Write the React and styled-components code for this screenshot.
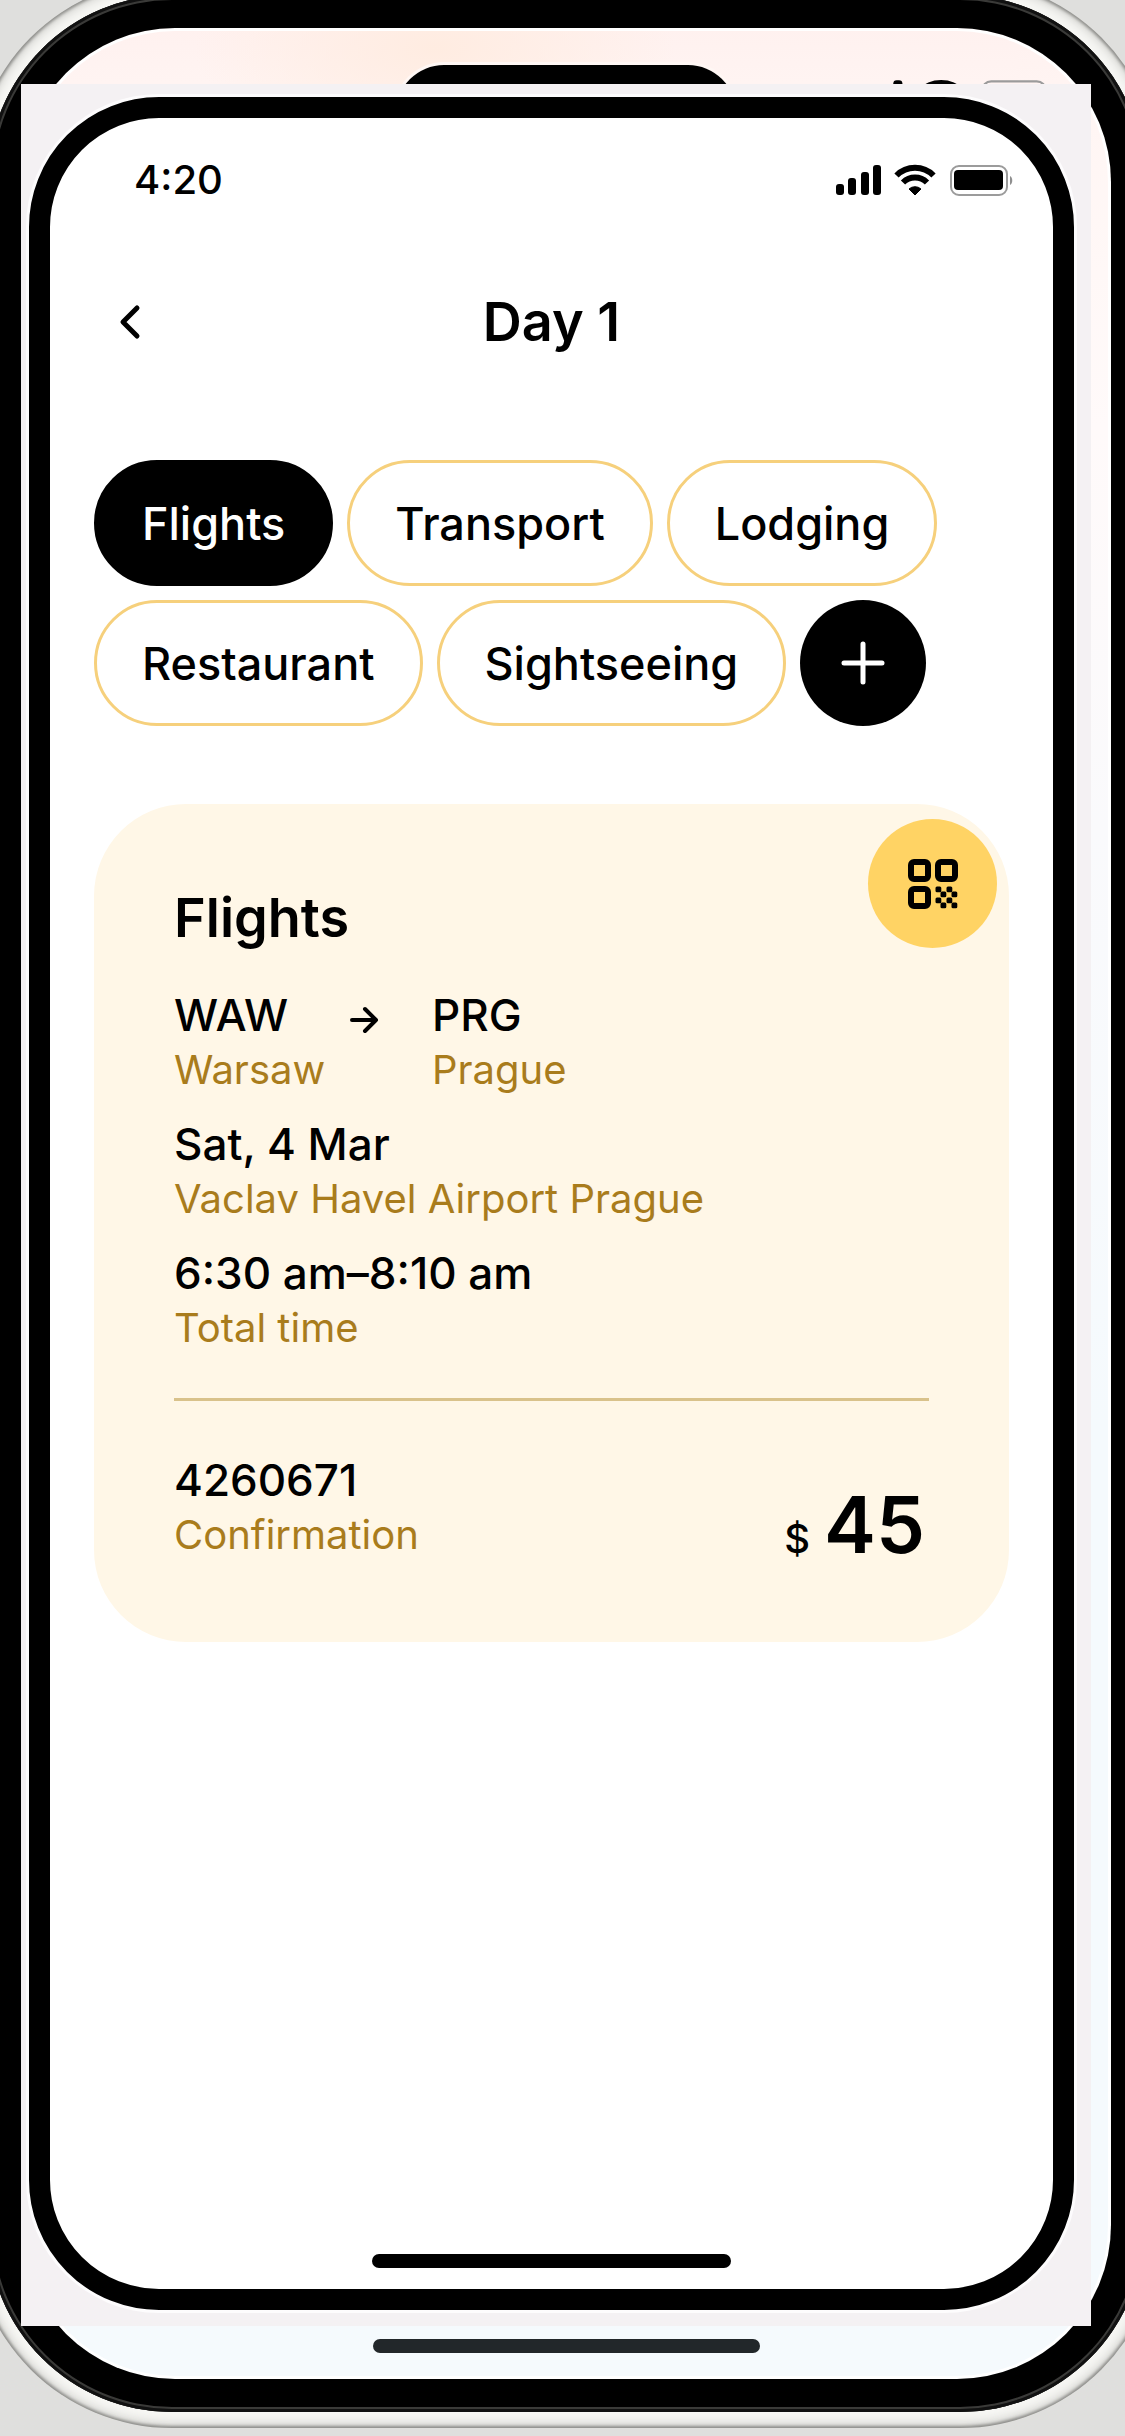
import React, { useState } from "react";
import styled, { createGlobalStyle } from "styled-components";

const GlobalStyle = createGlobalStyle`
  *, *::before, *::after { box-sizing: border-box; }
  body {
    margin: 0;
    background: #dfdfdd;
    font-family: "Inter", "Liberation Sans", sans-serif;
    color: #000;
  }
  h1, h2, p, dl, dt, dd { margin: 0; }
  button { font: inherit; color: inherit; cursor: pointer; }
`;

const Stage = styled.div`
  display: grid;
  grid-template-columns: minmax(0, 1fr);
  min-height: 100vh;
  overflow: hidden;
`;

const BackPhone = styled.div`
  grid-area: 1 / 1;
  display: flex;
  margin: -21px -35px 8px -28px;
  padding: 16px;
  border-radius: 200px;
  background: #f7f7f4;
  box-shadow: inset 0 0 3px 2px #8e8e8b, inset 0 0 12px 3px #c4c4c0;
`;

const BackBezel = styled.div`
  flex: 1;
  display: flex;
  padding: 33px;
  border-radius: 184px;
  background: #000;
  box-shadow: inset 0 0 0 3px #111, inset 0 0 0 5px #3a3a38;
`;

const BackScreen = styled.div`
  flex: 1;
  display: flex;
  flex-direction: column;
  justify-content: space-between;
  align-items: center;
  border-radius: 154px;
  padding: 37px 0 26px;
  background:
    radial-gradient(ellipse 240px 110px at 38% 20px, #ffece1 0%, rgba(255, 236, 225, 0) 100%),
    linear-gradient(#fff1ef 0, #fff6f4 90px, #fffafa 400px, #fafafc 800px, #f5fafd 1400px, #f5fafd 100%);
  box-shadow: inset 0 0 0 3px #fff;
`;

const BackStatus = styled.div`
  align-self: stretch;
  display: grid;
  grid-template-columns: 1fr 340px 1fr;
  align-items: start;
`;

const Island = styled.div`
  grid-column: 2;
  height: 96px;
  border-radius: 48px;
  background: #000;
  box-shadow: 0 0 0 3px #fff7f4;
`;

const BackIcons = styled.div`
  display: flex;
  justify-content: flex-end;
  padding: 14px 56px 0 0;
`;

const HomeBar = styled.div`
  width: ${(p) => p.$width}px;
  height: 14px;
  border-radius: 7px;
  background: ${(p) => p.$color};
`;

const Sheet = styled.div`
  grid-area: 1 / 1;
  display: flex;
  margin: 84px 34px 110px 21px;
  padding: 13px 17px 16px 8px;
  background: #f4f1f3;
`;

const Phone = styled.main`
  flex: 1;
  min-width: 0;
  display: flex;
  flex-direction: column;
  border: 21px solid #000;
  border-radius: 130px;
  background: #fff;
  box-shadow: 0 0 0 3px #fdfcfd;
`;

const StatusBar = styled.div`
  display: flex;
  justify-content: space-between;
  align-items: center;
  height: 124px;
  padding: 0 38px 0 84px;
`;

const Clock = styled.time`
  font-size: 40px;
  font-weight: 500;
  line-height: 48px;
`;

const Header = styled.header`
  display: grid;
  grid-template-columns: 72px 1fr 72px;
  align-items: center;
  height: 160px;
  padding: 0 44px;
`;

const BackButton = styled.button`
  display: grid;
  place-items: center;
  height: 72px;
  padding: 0;
  border: 0;
  background: none;
`;

const Title = styled.h1`
  font-size: 54px;
  line-height: 64px;
  font-weight: 600;
  text-align: center;
`;

const Tabs = styled.nav`
  display: flex;
  flex-direction: column;
  gap: 14px;
  padding: 58px 44px 0;
`;

const TabRow = styled.div`
  display: flex;
  gap: 14px;
`;

const Pill = styled.button`
  height: 126px;
  padding: 0 45px;
  border: 3px solid ${(p) => (p.$active ? "#000" : "#f6d07c")};
  border-radius: 63px;
  background: ${(p) => (p.$active ? "#000" : "#fff")};
  color: ${(p) => (p.$active ? "#fff" : "#000")};
  font-size: 45px;
  font-weight: 500;
  white-space: nowrap;
`;

const RoundButton = styled.button`
  display: grid;
  place-items: center;
  width: ${(p) => p.$size}px;
  height: ${(p) => p.$size}px;
  padding: 0;
  border: 0;
  border-radius: 50%;
  background: ${(p) => p.$fill};
`;

const Card = styled.section`
  position: relative;
  margin: 78px 44px 0;
  padding: 82px 80px;
  border-radius: 92px;
  background: #fff7e7;
`;

const Badge = styled.div`
  position: absolute;
  top: 15px;
  right: 12px;
`;

const CardTitle = styled.h2`
  margin-bottom: 35px;
  font-size: 54px;
  line-height: 64px;
  font-weight: 600;
`;

const Details = styled.div`
  display: flex;
  flex-direction: column;
  gap: 19px;
`;

const Route = styled.div`
  display: grid;
  grid-template-columns: 175px 83px 1fr;
`;

const ArrowCell = styled.div`
  display: flex;
  align-items: center;
  height: 70px;
`;

const Value = styled.p`
  font-size: 44px;
  line-height: 60px;
  font-weight: 500;
  white-space: nowrap;
`;

const Caption = styled.p`
  font-size: 40px;
  line-height: 50px;
  color: #a97c1c;
  white-space: nowrap;
`;

const Divider = styled.hr`
  height: 3px;
  margin: 45px 0 49px;
  border: 0;
  background: #d9c28b;
`;

const Summary = styled.div`
  display: flex;
  justify-content: space-between;
  align-items: flex-end;
`;

const Price = styled.p`
  display: flex;
  align-items: baseline;
  gap: 14px;
  padding-right: 4px;
`;

const Currency = styled.span`
  font-size: 40px;
  font-weight: 500;
  line-height: 40px;
`;

const Amount = styled.strong`
  font-size: 78px;
  font-weight: 600;
  line-height: 70px;
`;

const Footer = styled.footer`
  display: flex;
  justify-content: center;
  margin-top: auto;
  padding-bottom: 21px;
`;

function StatusIcons({ width = 180 }) {
  return (
    <svg width={width} viewBox="0 0 180 32" aria-label="Signal, Wi-Fi and battery" role="img">
      <rect x="1" y="20" width="8" height="11" rx="3" />
      <rect x="13" y="14" width="8" height="17" rx="3" />
      <rect x="26" y="8" width="8" height="23" rx="3" />
      <rect x="38" y="1" width="8" height="30" rx="3" />
      <g fill="none" stroke="#000" strokeWidth="6">
        <path d="M61.500 11.500a26 26 0 0 1 37 0" />
        <path d="M68 18.500a17 17 0 0 1 24 0" />
      </g>
      <path d="M74 25a9 9 0 0 1 12 0l-6 6z" stroke="#000" strokeWidth="1" strokeLinejoin="round" />
      <rect x="116" y="2" width="56" height="29" rx="8" fill="none" stroke="#9b9b9b" strokeWidth="2" />
      <rect x="119" y="6" width="49" height="20" rx="4" />
      <path d="M175 12c3 1 3 8 0 9z" fill="#8f8f8f" />
    </svg>
  );
}

function ChevronIcon() {
  return (
    <svg width="24" height="36" viewBox="0 0 24 36" fill="none" stroke="#000" strokeWidth="5" strokeLinecap="round" strokeLinejoin="round">
      <path d="M19 4 5 18l14 14" />
    </svg>
  );
}

function PlusIcon() {
  return (
    <svg width="44" height="44" viewBox="0 0 44 44" stroke="#fff" strokeWidth="5" strokeLinecap="round">
      <path d="M22 3v38M3 22h38" />
    </svg>
  );
}

function ArrowIcon() {
  return (
    <svg width="30" height="30" viewBox="0 0 30 30" fill="none" stroke="#000" strokeWidth="4" strokeLinecap="round" strokeLinejoin="round">
      <path d="M3 15h24M16 4l11 11-11 11" />
    </svg>
  );
}

function QrIcon() {
  const dots = [[27, 27], [38, 27], [32, 32], [43, 32], [27, 38], [38, 38], [32, 43], [43, 43]];
  return (
    <svg width="50" height="50" viewBox="0 0 50 50">
      <g fill="none" stroke="#000" strokeWidth="6">
        <rect x="3" y="3" width="17" height="17" rx="3" />
        <rect x="30" y="3" width="17" height="17" rx="3" />
        <rect x="3" y="30" width="17" height="17" rx="3" />
      </g>
      {dots.map(([x, y]) => (
        <rect key={`${x}-${y}`} x={x + 0.5} y={y + 0.5} width="5.800" height="5.800" rx="1.500" />
      ))}
    </svg>
  );
}

function Field({ value, caption }) {
  return (
    <div>
      <Value>{value}</Value>
      <Caption>{caption}</Caption>
    </div>
  );
}

const tabRows = [
  ["Flights", "Transport", "Lodging"],
  ["Restaurant", "Sightseeing"],
];

export default function App() {
  const [active, setActive] = useState("Flights");

  return (
    <>
      <GlobalStyle />
      <Stage>
        <BackPhone aria-hidden="true">
          <BackBezel>
            <BackScreen>
              <BackStatus>
                <Island />
                <BackIcons>
                  <StatusIcons width={205} />
                </BackIcons>
              </BackStatus>
              <HomeBar $width={387} $color="#22272a" />
            </BackScreen>
          </BackBezel>
        </BackPhone>

        <Sheet>
          <Phone>
            <StatusBar>
              <Clock>4:20</Clock>
              <StatusIcons />
            </StatusBar>

            <Header>
              <BackButton type="button" aria-label="Back">
                <ChevronIcon />
              </BackButton>
              <Title>Day 1</Title>
            </Header>

            <Tabs aria-label="Categories">
              {tabRows.map((row, index) => (
                <TabRow key={row[0]}>
                  {row.map((name) => (
                    <Pill
                      key={name}
                      type="button"
                      $active={name === active}
                      aria-pressed={name === active}
                      onClick={() => setActive(name)}
                    >
                      {name}
                    </Pill>
                  ))}
                  {index === tabRows.length - 1 && (
                    <RoundButton type="button" aria-label="Add category" $size={126} $fill="#000">
                      <PlusIcon />
                    </RoundButton>
                  )}
                </TabRow>
              ))}
            </Tabs>

            <Card>
              <Badge>
                <RoundButton type="button" aria-label="Show QR code" $size={129} $fill="#ffd364">
                  <QrIcon />
                </RoundButton>
              </Badge>
              <CardTitle>Flights</CardTitle>
              <Details>
                <Route>
                  <Field value="WAW" caption="Warsaw" />
                  <ArrowCell>
                    <ArrowIcon />
                  </ArrowCell>
                  <Field value="PRG" caption="Prague" />
                </Route>
                <Field value="Sat, 4 Mar" caption="Vaclav Havel Airport Prague" />
                <Field value="6:30 am–8:10 am" caption="Total time" />
              </Details>
              <Divider />
              <Summary>
                <Field value="4260671" caption="Confirmation" />
                <Price>
                  <Currency>$</Currency>
                  <Amount>45</Amount>
                </Price>
              </Summary>
            </Card>

            <Footer>
              <HomeBar $width={359} $color="#000" />
            </Footer>
          </Phone>
        </Sheet>
      </Stage>
    </>
  );
}
